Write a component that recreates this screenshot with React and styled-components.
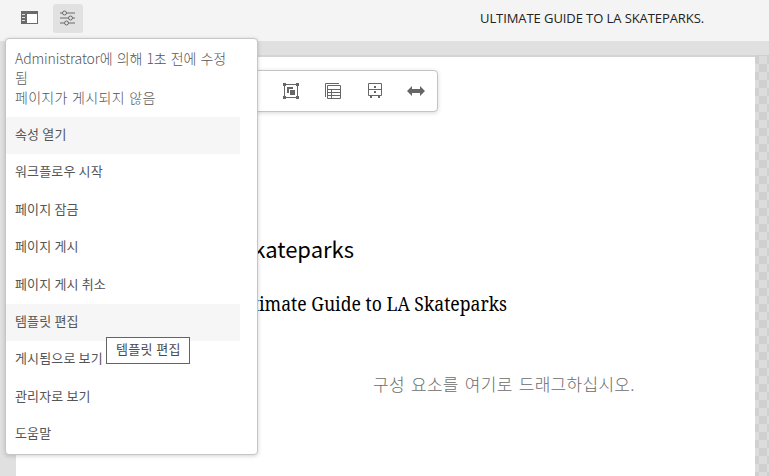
import React from 'react';
import styled, { createGlobalStyle } from 'styled-components';

const GlobalStyle = createGlobalStyle`
  * { box-sizing: border-box; }
  body { margin: 0; overflow: hidden; font-family: "Noto Sans CJK KR", sans-serif; }
  p, h1, h2, ul { margin: 0; padding: 0; font-weight: 400; }
`;

const Editor = styled.div`
  position: relative;
  display: flex;
  flex-direction: column;
  width: 769px;
  height: 476px;
  overflow: hidden;
  background: #e0e0e0;
`;

const TopBar = styled.header`
  display: flex;
  align-items: flex-start;
  height: 41px;
  flex: none;
  padding: 4px 0 0 15px;
  gap: 8px;
  background: #f4f4f4;
`;

const IconButton = styled.button`
  display: flex;
  align-items: center;
  justify-content: center;
  width: 30px;
  height: 29px;
  padding: 0 1px 1px 0;
  border: 0;
  border-radius: 3px;
  background: ${(p) => (p.$active ? '#e1e1e1' : 'transparent')};
`;

const PageName = styled.div`
  margin-left: 389px;
  font: 13px/29px "Open Sans", sans-serif;
  letter-spacing: -0.08px;
  color: #222;
  white-space: nowrap;
`;

const Stage = styled.main`
  display: flex;
  flex: 1;
  padding: 14px 0 0 16px;
`;

const Sheet = styled.section`
  width: 739px;
  border-top: 2px solid #d4d4d4;
  background: #fff;
`;

const Checker = styled.div`
  flex: 1;
  border-top: 1px solid #d0d0d0;
  background: repeating-conic-gradient(#dcdcdc 0 25%, #d0d0d0 0 50%) -4px 0 / 16px 16px;
`;

const Title = styled.h1`
  width: 338px;
  margin-top: 173px;
  text-align: right;
  font-size: 22px;
  line-height: 36px;
  color: #000;
`;

const Subtitle = styled.h2`
  width: 491px;
  margin-top: 22px;
  text-align: right;
  font: 20px/32px "Noto Serif", "Liberation Serif", serif;
  transform: scaleX(0.88);
  transform-origin: right;
  color: #000;
`;

const DropHint = styled.p`
  margin: 49px 0 0 357px;
  font-size: 17px;
  font-weight: 300;
  line-height: 30px;
  letter-spacing: 0.3px;
  word-spacing: 2px;
  color: #6c6c6c;
`;

const Toolbar = styled.div`
  position: absolute;
  left: 230px;
  top: 70px;
  display: flex;
  align-items: center;
  gap: 22px;
  width: 208px;
  height: 42px;
  padding-left: 50px;
  border: 1px solid #c4c4c4;
  border-radius: 4px;
  background: #fff;
  box-shadow: 0 1px 4px rgba(0, 0, 0, 0.16);
`;

const Popover = styled.aside`
  position: absolute;
  left: 5px;
  top: 38px;
  width: 253px;
  height: 417px;
  border: 1px solid #c6c6c6;
  border-radius: 4px;
  background: #fff;
  box-shadow: 0 1px 4px rgba(0, 0, 0, 0.18);
`;

const Status = styled.div`
  height: 78px;
  padding: 10px 0 0 9px;
  color: #555;
`;

const StatusLine = styled.p`
  font-size: 14px;
  font-weight: 300;
  line-height: 19.3px;
  letter-spacing: ${(p) => p.$spacing || 0}px;
  word-spacing: ${(p) => p.$gap || 0}px;
  white-space: nowrap;
`;

const Menu = styled.ul`
  list-style: none;
`;

const MenuItem = styled.li`
  width: 234px;
  height: 37.4px;
  padding-left: 9px;
  font-size: 13px;
  line-height: 34px;
  letter-spacing: 0.15px;
  color: #555;
  background: ${(p) => (p.$shaded ? '#f6f6f6' : 'transparent')};
`;

const Tooltip = styled.div`
  position: absolute;
  left: 106px;
  top: 337px;
  width: 84px;
  height: 27px;
  padding-left: 9px;
  border: 1px solid #646464;
  background: #fff;
  font-size: 13px;
  line-height: 22px;
  letter-spacing: 0.35px;
  color: #4b4b4b;
`;

const RailIcon = () => (
  <svg width="17" height="14" viewBox="0 0 17 14" fill="none">
    <path d="M0 0h17v13H0z" fill="#6a6a6a" />
    <path d="M6 3h10v9H6z" fill="#fff" />
    <path d="M1 3.5h3M1 6.5h3M1 9.5h3" stroke="#ddd" />
  </svg>
);

const SlidersIcon = () => (
  <svg width="15" height="16" viewBox="0 0 15 16" fill="none" stroke="#6a6a6a">
    <path d="M0 3h2.5M6.5 3H15M0 8h8.5M12.5 8H15M0 13h4.5M8.5 13H15" />
    <circle cx="4.5" cy="3" r="2" />
    <circle cx="10.5" cy="8" r="2" />
    <circle cx="6.5" cy="13" r="2" />
  </svg>
);

const GroupIcon = () => (
  <svg width="20" height="18" viewBox="0 0 20 18" fill="#666">
    <path d="M3.5 2.5h13v13h-13z" fill="none" stroke="#666" />
    <path d="M2 1h3v3H2zM15 1h3v3h-3zM2 14h3v3H2zM15 14h3v3h-3z" />
    <path d="M6 5h6v2H8v4H6z" />
    <path d="M9 8h5v5H9z" />
  </svg>
);

const TableIcon = () => (
  <svg width="20" height="18" viewBox="0 0 20 18" fill="none" stroke="#666">
    <path d="M2.5 15V1.5H16" />
    <path d="M4.5 3.5h13v13h-13zM4.5 7.5h13M4.5 10.5h13M4.5 13.5h13M8.5 7.5v9" />
  </svg>
);

const CabinetIcon = () => (
  <svg width="20" height="18" viewBox="0 0 20 18" fill="none" stroke="#666">
    <path d="M3.5 1.5h13v12h-13zM3.5 7.5h13" />
    <path d="M9 5h2M9 10h2M5 15h2M13 15h2" strokeWidth="2" />
  </svg>
);

const WidthIcon = () => (
  <svg width="20" height="18" viewBox="0 0 20 18" fill="#666">
    <path d="M0 9l5-5v3h8V4l5 5-5 5v-3H5v3z" />
  </svg>
);

const items = [
  { label: '속성 열기', shaded: true },
  { label: '워크플로우 시작' },
  { label: '페이지 잠금' },
  { label: '페이지 게시' },
  { label: '페이지 게시 취소' },
  { label: '템플릿 편집', shaded: true },
  { label: '게시됨으로 보기' },
  { label: '관리자로 보기' },
  { label: '도움말' },
];

export default function App() {
  return (
    <Editor>
      <GlobalStyle />
      <TopBar>
        <IconButton><RailIcon /></IconButton>
        <IconButton $active><SlidersIcon /></IconButton>
        <PageName>ULTIMATE GUIDE TO LA SKATEPARKS.</PageName>
      </TopBar>
      <Stage>
        <Sheet>
          <Title>Skateparks</Title>
          <Subtitle>Ultimate Guide to LA Skateparks</Subtitle>
          <DropHint>구성 요소를 여기로 드래그하십시오.</DropHint>
        </Sheet>
        <Checker />
      </Stage>
      <Toolbar>
        <GroupIcon />
        <TableIcon />
        <CabinetIcon />
        <WidthIcon />
      </Toolbar>
      <Popover>
        <Status>
          <StatusLine $spacing={-0.1} $gap={1.2}>Administrator에 의해 1초 전에 수정</StatusLine>
          <StatusLine>됨</StatusLine>
          <StatusLine $spacing={0.3} $gap={1}>페이지가 게시되지 않음</StatusLine>
        </Status>
        <Menu>
          {items.map((item) => (
            <MenuItem key={item.label} $shaded={item.shaded}>{item.label}</MenuItem>
          ))}
        </Menu>
      </Popover>
      <Tooltip>템플릿 편집</Tooltip>
    </Editor>
  );
}
